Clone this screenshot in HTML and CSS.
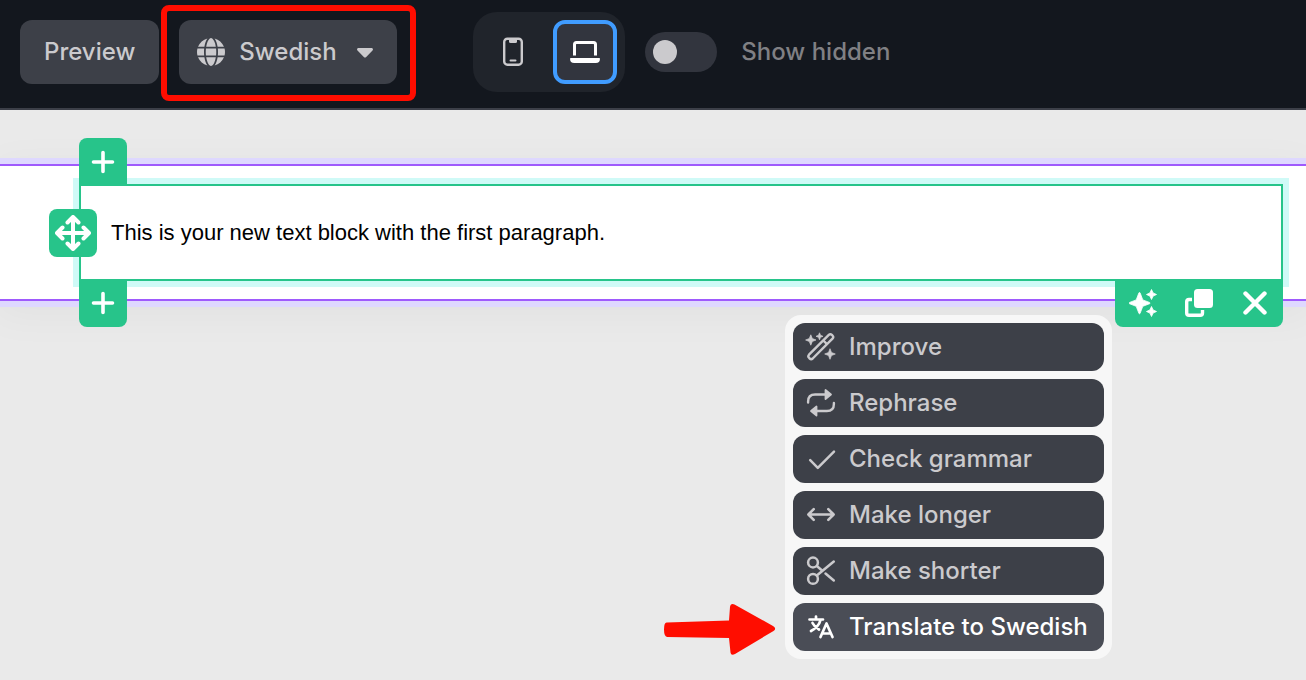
FILE: index.html
```html
<!DOCTYPE html>
<html lang="en">
<head>
<meta charset="utf-8">
<title>Email editor</title>
<link rel="stylesheet" href="styles.css">
</head>
<body>
<header class="topbar">
  <button class="btn" type="button">Preview</button>
  <div class="language">
    <svg class="language-globe" viewBox="0 0 512 512" aria-hidden="true"><path fill="currentColor" d="M352 256c0 22.2-1.2 43.6-3.3 64H163.3c-2.2-20.4-3.3-41.8-3.3-64s1.2-43.6 3.3-64H348.7c2.2 20.4 3.3 41.8 3.3 64zm28.8-64H503.9c5.3 20.5 8.1 41.9 8.1 64s-2.8 43.5-8.1 64H380.8c2.1-20.6 3.2-42 3.2-64s-1.1-43.4-3.2-64zm112.6-32H376.7c-10-63.9-29.8-117.4-55.3-151.6c78.3 20.7 142 77.5 171.9 151.6zm-149.1 0H167.7c6.1-36.4 15.5-68.6 27-94.7c10.5-23.6 22.2-40.7 33.5-51.5C239.4 3.2 248.7 0 256 0s16.6 3.2 27.8 13.8c11.3 10.8 23 27.9 33.5 51.5c11.6 26 20.9 58.2 27 94.7zm-209 0H18.6C48.6 85.9 112.2 29.1 190.6 8.4C165.1 42.6 145.3 96.1 135.3 160zM8.1 192H131.2c-2.1 20.6-3.2 42-3.2 64s1.1 43.4 3.2 64H8.1C2.8 299.5 0 278.1 0 256s2.8-43.5 8.1-64zM194.7 446.6c-11.6-26-20.9-58.2-27-94.6H344.3c-6.1 36.4-15.5 68.6-27 94.6c-10.5 23.6-22.2 40.7-33.5 51.5C272.6 508.8 263.3 512 256 512s-16.6-3.2-27.8-13.8c-11.3-10.8-23-27.9-33.5-51.5zM135.3 352c10 63.9 29.8 117.4 55.3 151.6C112.2 482.9 48.6 426.1 18.6 352H135.3zm358.1 0c-30 74.1-93.6 130.9-171.9 151.6c25.5-34.2 45.2-87.7 55.3-151.6H493.4z"/></svg>
    <select class="btn language-select" aria-label="Language">
      <option>Swedish</option>
    </select>
    <svg class="language-caret" viewBox="0 0 16 10" aria-hidden="true"><path fill="currentColor" d="M1.500 0h13c1.300 0 2 1.500 1 2.500L9.200 9c-.7.700-1.700.700-2.400 0L.5 2.500C-.5 1.500.2 0 1.500 0z"/></svg>
    <span class="highlight"></span>
  </div>
  <div class="devices">
    <button class="device" type="button" aria-label="Mobile">
      <svg width="20" height="30" viewBox="0 0 20 30" aria-hidden="true"><rect x="1.200" y="1.700" width="17.600" height="26" rx="3.200" fill="none" stroke="currentColor" stroke-width="2.400"/><path d="M6 2h8v2.500q0 1.500-1.500 1.500h-5Q6 6 6 4.500z" fill="currentColor"/><path d="M7.500 23.500h5" stroke="currentColor" stroke-width="2" stroke-linecap="round"/></svg>
    </button>
    <button class="device device-active" type="button" aria-label="Desktop" aria-pressed="true">
      <svg width="30" height="22" viewBox="0 0 30 22" aria-hidden="true"><path d="M4.500 14.500V3.500q0-2 2-2h17q2 0 2 2v11" fill="none" stroke="currentColor" stroke-width="3"/><path d="M.8 17h28.400q.8 0 .8.800 0 4.200-4.200 4.200H4.200Q0 22 0 17.800q0-.8.800-.8z" fill="currentColor"/></svg>
    </button>
  </div>
  <label class="toggle">
    <input class="toggle-input" type="checkbox">
    <span>Show hidden</span>
  </label>
</header>

<main class="canvas">
  <section class="section">
    <article class="block">
      <p class="block-text">This is your new text block with the first paragraph.</p>

      <button class="tool tool-add-above" type="button" aria-label="Add above">
        <svg width="24" height="24" viewBox="0 0 24 24" aria-hidden="true"><path d="M12 2.500v19M2.500 12h19" stroke="currentColor" stroke-width="3.600" stroke-linecap="round"/></svg>
      </button>
      <button class="tool tool-move" type="button" aria-label="Move">
        <svg width="36" height="36" viewBox="0 0 36 36" fill="none" stroke="currentColor" stroke-width="4" stroke-linecap="round" stroke-linejoin="round" aria-hidden="true"><path d="M18 2.500v31M2.500 18h31M12.500 7.500L18 2l5.500 5.500M12.500 28.500L18 34l5.500-5.500M7.500 12.500L2 18l5.500 5.500M28.500 12.500L34 18l-5.500 5.500"/></svg>
      </button>
      <button class="tool tool-add-below" type="button" aria-label="Add below">
        <svg width="24" height="24" viewBox="0 0 24 24" aria-hidden="true"><path d="M12 2.500v19M2.500 12h19" stroke="currentColor" stroke-width="3.600" stroke-linecap="round"/></svg>
      </button>

      <div class="block-actions">
        <button class="action" type="button" aria-label="AI tools">
          <svg width="28" height="28" viewBox="0 0 28 28" fill="currentColor" stroke="currentColor" stroke-width=".8" stroke-linejoin="round" aria-hidden="true"><path d="M10.500 3.500q.5 0 .7.600l2.600 6.800 6.600 2.500q.7.300.7.700t-.7.700l-6.600 2.500-2.600 6.800q-.2.700-.7.700t-.7-.7l-2.600-6.800L.7 14.800Q0 14.500 0 14.100t.7-.7l6.500-2.500 2.600-6.800q.2-.6.700-.6zM22.500.5l1.600 3.400 3.400 1.600-3.400 1.600-1.600 3.400-1.600-3.400-3.400-1.600 3.400-1.600zM22.500 17.500l1.600 3.400 3.400 1.600-3.400 1.600-1.600 3.400-1.600-3.400-3.400-1.600 3.400-1.600z"/></svg>
        </button>
        <button class="action" type="button" aria-label="Duplicate">
          <svg width="28" height="28" viewBox="0 0 28 28" aria-hidden="true"><rect x="9" y="0" width="19" height="19" rx="3.500" fill="currentColor"/><path d="M7 10.500H4q-2.300 0-2.300 2.300v11.200q0 2.300 2.300 2.300h11.200q2.300 0 2.300-2.300v-3" fill="none" stroke="currentColor" stroke-width="3.400"/></svg>
        </button>
        <button class="action" type="button" aria-label="Delete">
          <svg width="24" height="24" viewBox="0 0 24 24" aria-hidden="true"><path d="M2.500 2.500l19 19M21.500 2.500l-19 19" stroke="currentColor" stroke-width="4.400" stroke-linecap="round"/></svg>
        </button>
      </div>

      <div class="menu">
        <button class="menu-item" type="button">
          <svg class="menu-icon" viewBox="0 0 28 28" aria-hidden="true"><g fill="none" stroke="currentColor" stroke-width="2.400" stroke-linejoin="round"><path d="M2 21.700L21.800 1.900q1.500-1.500 3.100 0l.6.600q1.500 1.500 0 3.100L5.700 25.500q-1.500 1.400-3.100 0l-.6-.7q-1.400-1.500 0-3.100z"/><path d="M16.300 7.500l3.700 3.700"/></g><path fill="currentColor" stroke="currentColor" stroke-width=".7" stroke-linejoin="round" d="M3.800 1.800l1.500 3.700L9 7 5.300 8.500 3.800 12.200 2.300 8.500-1.400 7l3.700-1.500zM12.500-.2l1 2.500 2.500 1-2.500 1-1 2.500-1-2.500-2.500-1 2.500-1zM23 15.700l1.500 3.800 3.800 1.500-3.800 1.500L23 26.300l-1.500-3.800-3.800-1.500 3.800-1.500z"/></svg>
          Improve
        </button>
        <button class="menu-item" type="button">
          <svg class="menu-icon" viewBox="0 0 28 28" aria-hidden="true"><path d="M1.100 13.500V12.500q0-7 7-7H19M26.900 14v1q0 7-7 7H9" fill="none" stroke="currentColor" stroke-width="2.400" stroke-linecap="round"/><path d="M18.500 1v9l5.500-4.500zM9.500 17.500v9L4 22z" fill="currentColor" stroke="currentColor" stroke-width="1.800" stroke-linejoin="round"/></svg>
          Rephrase
        </button>
        <button class="menu-item" type="button">
          <svg class="menu-icon" viewBox="0 0 28 28" aria-hidden="true"><path d="M3.200 15.200l7.600 7.600L27 6.700" fill="none" stroke="currentColor" stroke-width="2.500" stroke-linecap="round" stroke-linejoin="round"/></svg>
          Check grammar
        </button>
        <button class="menu-item" type="button">
          <svg class="menu-icon" viewBox="0 0 28 28" aria-hidden="true"><path d="M1.500 13.500h25M6.700 8.200L1.400 13.500l5.300 5.300M21.300 8.200l5.300 5.300-5.300 5.300" fill="none" stroke="currentColor" stroke-width="2.600" stroke-linecap="round" stroke-linejoin="round"/></svg>
          Make longer
        </button>
        <button class="menu-item" type="button">
          <svg class="menu-icon" viewBox="0 0 28 28" aria-hidden="true"><g fill="none" stroke="currentColor" stroke-width="2.500" stroke-linecap="round"><circle cx="6" cy="5.500" r="4.900"/><circle cx="6" cy="21.900" r="4.900"/><path d="M9.800 18.500L26.800 4.500M9.800 9l4.700 4M18.500 16.500l8.300 7"/></g></svg>
          Make shorter
        </button>
        <button class="menu-item menu-item-active" type="button">
          <svg class="menu-icon" viewBox="0 0 28 28" aria-hidden="true"><g fill="none" stroke="currentColor" stroke-width="2.700" stroke-linecap="round" stroke-linejoin="round"><path d="M2.500 6.500h13.500M9 3.500v3M13.500 7Q12 13.500 4 18M5.500 10q2 4 6.500 6.500M13.500 24l6-13.500 6 13.500M15.500 20.500h8"/></g></svg>
          Translate to Swedish
        </button>
        <svg class="pointer" viewBox="0 0 112 52" aria-hidden="true"><path fill="#ff0d00" d="M3 19.500L65 17.500l1-13.500Q66.500 0 70.500 1.500L109 23q4 2.500.5 5L71 51q-4 2-4.500-1.500L65 35 3.500 34Q0 34 0 26.500t3-7z"/></svg>
      </div>
    </article>
  </section>
</main>
</body>
</html>
```
FILE: styles.css
```css
* {
  box-sizing: border-box;
}

body {
  margin: 0;
  min-height: 100vh;
  display: flex;
  flex-direction: column;
  background: #eaeaea;
  font-family: Inter, "Liberation Sans", sans-serif;
  font-size: 24px;
  font-weight: 500;
  line-height: 32px;
}

button,
select {
  font: inherit;
  color: inherit;
  border: 0;
  margin: 0;
  padding: 0;
  cursor: pointer;
}

svg {
  display: block;
  flex: none;
}

.topbar {
  display: flex;
  align-items: center;
  gap: 20px;
  padding: 12px 20px 16px;
  background: #13171e;
  border-bottom: 2px solid #3c3f48;
  color: #cbcacd;
}

.btn {
  height: 64px;
  padding: 0 24px;
  border-radius: 12px;
  background: #3d4048;
}

.language {
  position: relative;
  margin-right: 56px;
}

.language-select {
  display: block;
  appearance: none;
  width: 218px;
  padding: 0 56px 0 60px;
}

.language-globe,
.language-caret {
  position: absolute;
  pointer-events: none;
}

.language-globe {
  left: 18px;
  top: 18px;
  width: 28px;
}

.language-caret {
  right: 24px;
  top: 28px;
  width: 16px;
}

.highlight {
  position: absolute;
  inset: -15px -19px -17px -18px;
  border: 6px solid #ff0d00;
  border-radius: 8px;
  pointer-events: none;
}

.devices {
  display: flex;
  gap: 8px;
  padding: 8px;
  border-radius: 24px;
  background: #20242b;
}

.device {
  display: grid;
  place-items: center;
  width: 64px;
  height: 64px;
  border-radius: 12px;
  background: transparent;
}

.device-active {
  border: 4px solid #409cff;
  background: #32353e;
  color: #fff;
}

.toggle {
  display: flex;
  align-items: center;
  gap: 24px;
  color: #808084;
}

.toggle-input {
  appearance: none;
  width: 72px;
  height: 40px;
  margin: 0;
  padding: 8px;
  border-radius: 20px;
  background: #32353e;
}

.toggle-input::before {
  content: "";
  display: block;
  width: 24px;
  height: 24px;
  border-radius: 50%;
  background: #cbcacd;
}

.toggle-input:checked::before {
  margin-left: auto;
}

.canvas {
  flex: 1;
  padding-top: 54px;
}

.section {
  padding: 18px 23px 18px 79px;
  border: solid #9f5afd;
  border-width: 2px 0;
  background: #fff;
  box-shadow: 0 0 0 6px #ded8ff, 0 8px 40px 6px rgba(0, 0, 0, 0.04);
}

.block {
  position: relative;
  padding: 30px;
  border: 2px solid #27c48a;
  box-shadow: 0 0 0 6px #cffaf7;
}

.block-text {
  margin: 0;
  color: #000;
  font: 22px/33px "Liberation Sans", Arial, sans-serif;
}

.tool {
  position: absolute;
  display: grid;
  place-items: center;
  width: 48px;
  height: 48px;
  border-radius: 8px;
  background: #27c48a;
  color: #fff;
}

.tool-add-above {
  left: -2px;
  bottom: 100%;
  border-radius: 8px 8px 0 0;
}

.tool-move {
  left: -32px;
  top: calc(50% - 24px);
}

.tool-add-below {
  left: -2px;
  top: 100%;
  border-radius: 0 0 8px 8px;
}

.block-actions {
  position: absolute;
  right: -2px;
  top: 100%;
  display: flex;
  border-radius: 0 0 8px 8px;
  background: #27c48a;
  color: #fff;
}

.action {
  display: grid;
  place-items: center;
  width: 56px;
  height: 48px;
  background: transparent;
}

.menu {
  position: absolute;
  right: 169px;
  top: calc(100% + 36px);
  display: grid;
  gap: 8px;
  width: 327px;
  padding: 8px;
  border-radius: 16px;
  background: #f7f7f7;
}

.menu-item {
  display: flex;
  align-items: center;
  gap: 14px;
  height: 48px;
  padding: 0 14px;
  border-radius: 12px;
  background: #3d4048;
  color: #cbcacd;
  white-space: nowrap;
}

.menu-item-active {
  background: #4a4d56;
  color: #fff;
}

.menu-icon {
  width: 28px;
  height: 28px;
  overflow: visible;
}

.pointer {
  position: absolute;
  right: calc(100% + 9px);
  bottom: 4px;
  width: 112px;
}
```
